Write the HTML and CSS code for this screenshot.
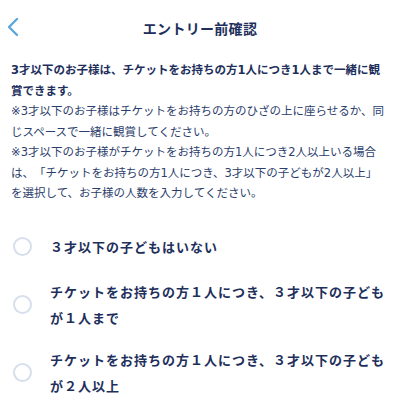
FILE: index.html
```html
<!DOCTYPE html>
<html lang="ja">
<head>
  <meta charset="UTF-8" />
  <meta name="viewport" content="width=device-width, initial-scale=1.0"/>
  <title>エントリー前確認</title>
  <link rel="stylesheet" href="styles.css">
</head>
<body>
  <header class="topbar">
    <a class="back" href="#" aria-label="戻る">
      <svg width="12" height="20" viewBox="0 0 12 20">
        <path d="M10 2 L2 10 L10 18" fill="none" stroke="#5aa7dc" stroke-width="2.4" stroke-linecap="round" stroke-linejoin="round"/>
      </svg>
    </a>
    <h1 class="title">エントリー前確認</h1>
  </header>

  <section class="notice">
    <p class="lead">3才以下のお子様は、チケットをお持ちの方1人につき1人まで一緒に観賞できます。</p>
    <p>※3才以下のお子様はチケットをお持ちの方のひざの上に座らせるか、同じスペースで一緒に観賞してください。</p>
    <p>※3才以下のお子様がチケットをお持ちの方1人につき2人以上いる場合は、「チケットをお持ちの方1人につき、3才以下の子どもが2人以上」を選択して、お子様の人数を入力してください。</p>
  </section>

  <ul class="options">
    <li class="option">
      <span class="radio"></span>
      <span class="label">３才以下の子どもはいない</span>
    </li>
    <li class="option">
      <span class="radio"></span>
      <span class="label">チケットをお持ちの方１人につき、３才以下の子どもが１人まで</span>
    </li>
    <li class="option">
      <span class="radio"></span>
      <span class="label">チケットをお持ちの方１人につき、３才以下の子どもが２人以上</span>
    </li>
  </ul>
</body>
</html>
```

FILE: styles.css
```css
:root {
  --navy: #1e2f5c;
  --text: #2b3d6b;
  --accent: #5aa7dc;
  --ring: #d6dfeb;
}
body {
  margin: 0;
  background: #fff;
  color: var(--text);
  font-family: "Noto Sans CJK JP", "Noto Sans", sans-serif;
  text-spacing-trim: space-all;
}
.topbar {
  height: 56px;
  display: flex;
  align-items: center;
  justify-content: center;
  position: relative;
}
.back {
  position: absolute;
  left: 7px;
  top: 17px;
  display: block;
  line-height: 0;
}
.title {
  margin: 0;
  font-size: 14px;
  font-weight: 700;
  color: var(--navy);
  letter-spacing: 0.3px;
}
.notice {
  padding: 4px 13px 0 11px;
  font-family: "DejaVu Sans", "Noto Sans CJK JP", sans-serif;
}
.notice p {
  margin: 0;
  font-size: 11.5px;
  line-height: 20.5px;
}
.notice .lead {
  font-weight: 700;
  color: var(--navy);
}
.options {
  list-style: none;
  margin: 0;
  padding: 19px 0 0 0;
}
.option {
  display: flex;
  align-items: center;
  min-height: 32px;
  padding: 8px 14px 8px 13px;
}
.radio {
  flex: none;
  width: 15px;
  height: 15px;
  border: 2px solid var(--ring);
  border-radius: 50%;
  margin-right: 18px;
}
.label {
  font-size: 13px;
  font-weight: 700;
  color: var(--navy);
  line-height: 26px;
  letter-spacing: 1px;
}
```
